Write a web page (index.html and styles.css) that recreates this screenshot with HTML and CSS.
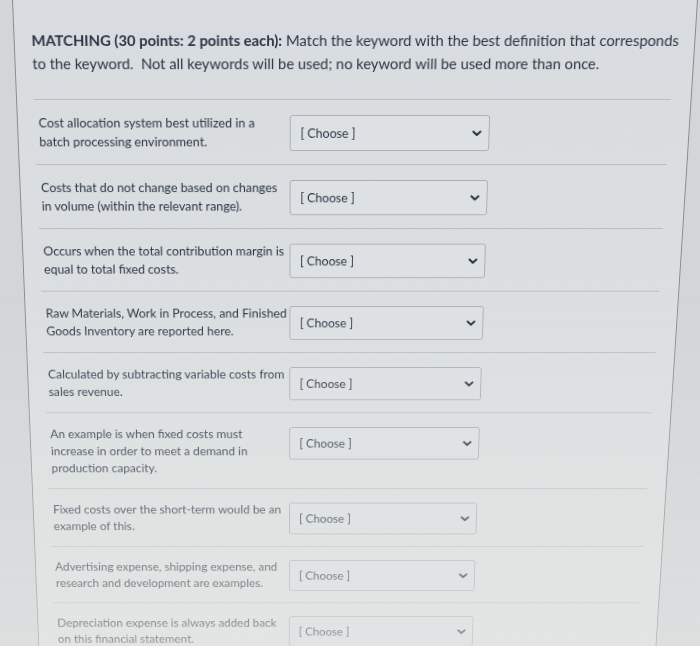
FILE: index.html
```html
<!DOCTYPE html>
<html lang="en">
<head>
<meta charset="utf-8">
<title>Matching question</title>
<link rel="stylesheet" href="styles.css">
</head>
<body>
<div class="screen">
  <div class="panel">
    <div class="content">
      <p class="prompt"><strong>MATCHING (30 points: 2 points each):</strong> Match the keyword with the best definition that corresponds<br>to the keyword.&nbsp; Not all keywords will be used; no keyword will be used more than once.</p>
      <ul class="matches">
        <li class="match">
          <div class="label">Cost allocation system best utilized in a<br>batch processing environment.</div>
          <div class="select"><span>[ Choose ]</span><svg class="chev" width="10" height="7" viewBox="0 0 10 7"><path d="M1.5 1.5 L5 5 L8.5 1.5"/></svg></div>
        </li>
        <li class="match">
          <div class="label">Costs that do not change based on changes<br>in volume (within the relevant range).</div>
          <div class="select"><span>[ Choose ]</span><svg class="chev" width="10" height="7" viewBox="0 0 10 7"><path d="M1.5 1.5 L5 5 L8.5 1.5"/></svg></div>
        </li>
        <li class="match">
          <div class="label">Occurs when the total contribution margin is<br>equal to total fixed costs.</div>
          <div class="select"><span>[ Choose ]</span><svg class="chev" width="10" height="7" viewBox="0 0 10 7"><path d="M1.5 1.5 L5 5 L8.5 1.5"/></svg></div>
        </li>
        <li class="match">
          <div class="label">Raw Materials, Work in Process, and Finished<br>Goods Inventory are reported here.</div>
          <div class="select"><span>[ Choose ]</span><svg class="chev" width="10" height="7" viewBox="0 0 10 7"><path d="M1.5 1.5 L5 5 L8.5 1.5"/></svg></div>
        </li>
        <li class="match">
          <div class="label">Calculated by subtracting variable costs from<br>sales revenue.</div>
          <div class="select"><span>[ Choose ]</span><svg class="chev" width="10" height="7" viewBox="0 0 10 7"><path d="M1.5 1.5 L5 5 L8.5 1.5"/></svg></div>
        </li>
        <li class="match">
          <div class="label">An example is when fixed costs must<br>increase in order to meet a demand in<br>production capacity.</div>
          <div class="select"><span>[ Choose ]</span><svg class="chev" width="10" height="7" viewBox="0 0 10 7"><path d="M1.5 1.5 L5 5 L8.5 1.5"/></svg></div>
        </li>
        <li class="match">
          <div class="label">Fixed costs over the short-term would be an<br>example of this.</div>
          <div class="select"><span>[ Choose ]</span><svg class="chev" width="10" height="7" viewBox="0 0 10 7"><path d="M1.5 1.5 L5 5 L8.5 1.5"/></svg></div>
        </li>
        <li class="match">
          <div class="label">Advertising expense, shipping expense, and<br>research and development are examples.</div>
          <div class="select"><span>[ Choose ]</span><svg class="chev" width="10" height="7" viewBox="0 0 10 7"><path d="M1.5 1.5 L5 5 L8.5 1.5"/></svg></div>
        </li>
        <li class="match">
          <div class="label">Depreciation expense is always added back<br>on this financial statement.</div>
          <div class="select"><span>[ Choose ]</span><svg class="chev" width="10" height="7" viewBox="0 0 10 7"><path d="M1.5 1.5 L5 5 L8.5 1.5"/></svg></div>
        </li>
      </ul>
    </div>
  </div>
</div>
</body>
</html>
```

FILE: styles.css
```css
html, body {
  margin: 0;
  height: 646px;
  overflow: hidden;
}

body {
  background: #d3d6d8;
  font-family: Lato, "Noto Sans", sans-serif;
  color: #2a3545;
}

body::after {
  content: "";
  position: fixed;
  inset: 0;
  pointer-events: none;
  background: linear-gradient(to bottom,
    rgba(228, 231, 229, 0) 0%,
    rgba(228, 231, 229, 0) 45%,
    rgba(228, 231, 229, 0.55) 100%);
}

.screen {
  transform-origin: 278px 0;
  transform: perspective(1150px) rotateX(-10deg);
}

.panel {
  margin-left: 12px;
  width: 684px;
  min-height: 900px;
  border-left: 1px solid #868c91;
  border-right: 1px solid #868c91;
  background: linear-gradient(to bottom, #d8dce0, #e1e4e2);
}

.content {
  padding-left: 17px;
}

.prompt {
  margin: 0;
  padding: 29px 0 25px;
  width: 668px;
  font-size: 14.85px;
  line-height: 24px;
}

.prompt strong {
  font-weight: 700;
}

.matches {
  list-style: none;
  margin: 0;
  padding: 0;
  width: 647px;
  border-top: 1px solid #b6bcc1;
}

.match {
  display: flex;
  align-items: flex-start;
  padding: 14px 0 14px 4px;
  border-bottom: 1px solid #b6bcc1;
}

.label {
  width: 256px;
  flex: none;
  font-size: 12.8px;
  line-height: 20px;
}

.select {
  box-sizing: border-box;
  width: 204px;
  height: 38px;
  margin-top: 2px;
  flex: none;
  display: flex;
  align-items: center;
  justify-content: space-between;
  padding: 0 7px 0 10px;
  border: 1px solid #a9afb5;
  border-radius: 3px;
  background: #dee1e4;
  font-size: 12.6px;
}

.chev path {
  fill: none;
  stroke: #2a3545;
  stroke-width: 2.2;
  stroke-linecap: round;
  stroke-linejoin: round;
}
```
